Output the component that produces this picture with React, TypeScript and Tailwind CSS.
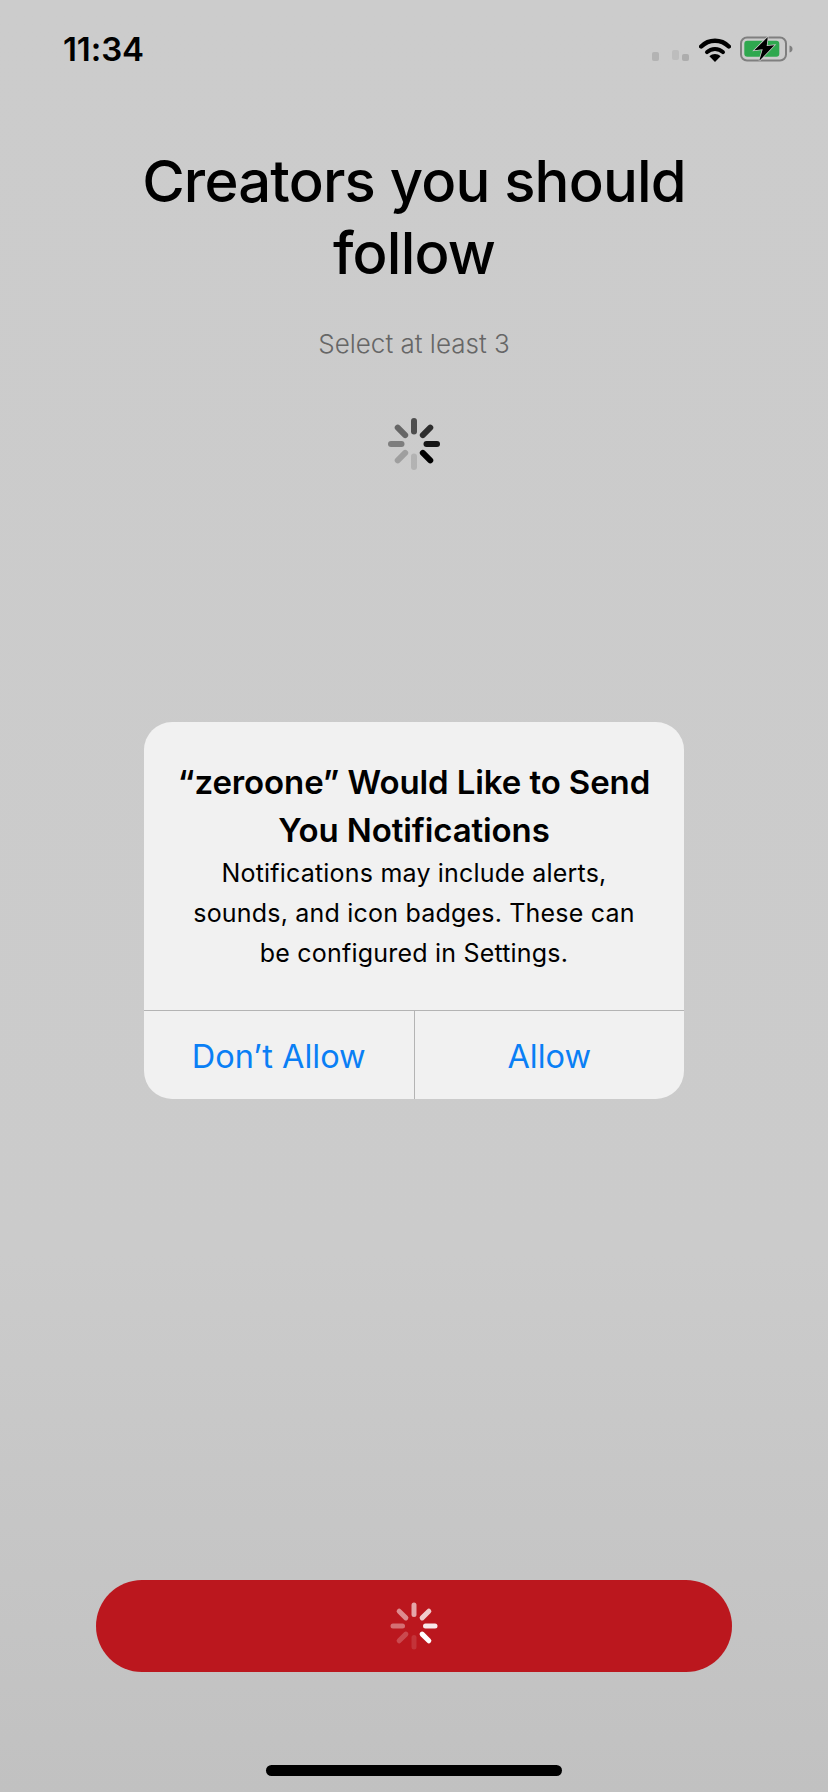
const SPOKE_ANGLES = [135, 180, 225, 270, 315, 0, 45, 90];
const SPOKE_OPACITY = [1, 0.12, 0.22, 0.38, 0.5, 0.62, 0.78, 0.9];

function Spinner({ color, size, inner, outer, width }: { color: string; size: number; inner: number; outer: number; width: number }) {
  const c = size / 2;
  return (
    <svg width={size} height={size} viewBox={`0 0 ${size} ${size}`} fill="none">
      {SPOKE_ANGLES.map((angle, i) => (
        <line
          key={angle}
          x1={c}
          y1={c - inner}
          x2={c}
          y2={c - outer}
          stroke={color}
          strokeWidth={width}
          strokeLinecap="round"
          opacity={SPOKE_OPACITY[i]}
          transform={`rotate(${angle} ${c} ${c})`}
        />
      ))}
    </svg>
  );
}

function StatusIcons() {
  return (
    <div className="flex items-center">
      {/* signal, mostly faded out */}
      <div className="flex items-end h-[25px] w-[47px] pb-[1px]">
        <div className="w-[7px] h-[9px] rounded-[2px] bg-[#b3b3b3]" />
        <div className="ml-[13px] w-[7px] h-[10px] mb-[1px] rounded-[2px] bg-[#bdbdbd]" />
        <div className="ml-[3px] w-[7px] h-[7px] rounded-[2px] bg-[#adadad]" />
      </div>
      <svg width="32" height="25" viewBox="0 0 32 25" fill="none">
        <path d="M2.2 9.5C9.8 1.8 22.2 1.8 29.8 9.5" stroke="#000" strokeWidth="4.4" strokeLinecap="round" />
        <path d="M8 15.2C12.4 10.8 19.6 10.8 24 15.2" stroke="#000" strokeWidth="4" strokeLinecap="round" />
        <path d="M16 25L10.4 19.2C13.6 16.4 18.4 16.4 21.6 19.2Z" fill="#000" />
      </svg>
      <svg width="54" height="26" viewBox="0 0 54 26" fill="none" className="ml-[9px]">
        <rect x="1" y="1.5" width="45" height="23" rx="6" stroke="#7f7f7f" strokeWidth="2" />
        <rect x="4.3" y="4.8" width="35" height="16" rx="3" fill="#2fa84f" />
        <path d="M49.5 9.5C51.5 10 52.5 11.3 52.5 13C52.5 14.7 51.5 16 49.5 16.5Z" fill="#7f7f7f" />
        <path d="M27.7 1L14.3 14.3L22.7 13.3L19.3 24.8L34.3 9.3L26.7 10Z" fill="#000" stroke="#cbcbcb" strokeWidth="1.5" paintOrder="stroke" />
      </svg>
    </div>
  );
}

export default function App() {
  return (
    <div className="relative flex flex-col items-center w-[828px] h-[1792px] overflow-hidden bg-linear-to-b from-[#cccccc] via-[#cbcbcb] via-70% to-[#c1c1c1] font-['Inter',sans-serif] text-black">
      {/* status bar */}
      <div className="flex w-full h-[98px] shrink-0 items-center justify-between pl-[63px] pr-[34px]">
        <span className="text-[33px] font-semibold leading-none tracking-[-0.1px]">11:34</span>
        <StatusIcons />
      </div>

      <h1 className="mt-[47px] w-[600px] text-center text-[58px] leading-[72px] font-medium tracking-[-0.8px]">
        Creators you should follow
      </h1>
      <p className="mt-[37px] text-[26px] leading-[36px] font-light text-[#666666]">Select at least 3</p>

      <div className="mt-[54px]">
        <Spinner color="#000" size={56} inner={12.5} outer={23} width={6} />
      </div>

      {/* continue button */}
      <div className="mt-auto flex h-[92px] w-[636px] items-center justify-center rounded-full bg-[#bb171e]">
        <Spinner color="#fff" size={52} inner={11.5} outer={21} width={5} />
      </div>

      {/* home indicator */}
      <div className="mt-[93px] mb-[16px] h-[11px] w-[296px] rounded-full bg-black" />

      {/* permission alert */}
      <div className="absolute left-[144px] top-[722px] w-[540px] overflow-hidden rounded-[28px] bg-[#f1f1f1] text-center">
        <div className="h-[288px] px-[20px] pt-[36px]">
          <h2 className="text-[33px] leading-[48px] font-semibold tracking-[-0.1px]">
            “zeroone” Would Like to Send You Notifications
          </h2>
          <p className="-mt-[1px] px-[20px] text-[25px] leading-[40px] tracking-[0.2px]">
            Notifications may include alerts, sounds, and icon badges. These can be configured in Settings.
          </p>
        </div>
        <div className="flex h-[89px] border-t border-[#b4b4b4] text-[32.5px] text-[#0a7ff5]">
          <div className="flex flex-1 items-center justify-center border-r border-[#b4b4b4] pt-[4px]">Don’t Allow</div>
          <div className="flex flex-1 items-center justify-center pt-[4px]">Allow</div>
        </div>
      </div>
    </div>
  );
}
